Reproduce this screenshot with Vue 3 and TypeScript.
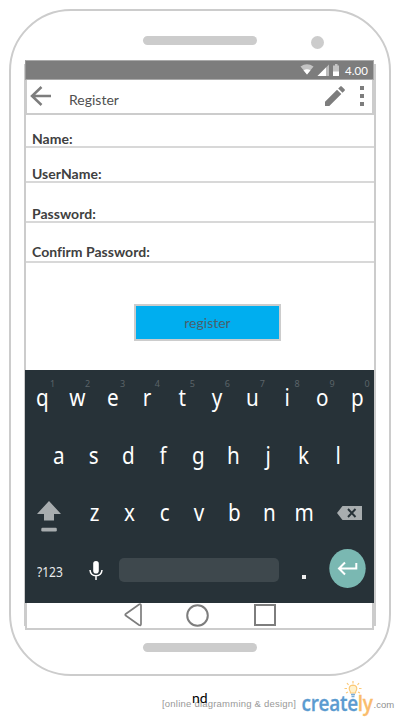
<script setup lang="ts">
interface Key { label: string; hint?: string }

const topRow: Key[] = [...'qwertyuiop'].map((label, i) => ({ label, hint: String((i + 1) % 10) }))
const homeRow: Key[] = [...'asdfghjkl'].map((label) => ({ label }))
const bottomRow: Key[] = [...'zxcvbnm'].map((label) => ({ label }))

const fields = [
  { label: 'Name:', kind: 'name' },
  { label: 'UserName:', kind: 'user' },
  { label: 'Password:', kind: 'pass' },
  { label: 'Confirm Password:', kind: 'confirm' },
]
</script>

<template>
  <div class="page">
    <div class="phone">
      <header class="phone-top">
        <span class="speaker"></span>
        <span class="camera"></span>
      </header>

      <main class="screen">
        <div class="status">
          <svg class="status-icons" width="42" height="14" viewBox="0 0 42 14">
            <path d="M.5 3.5Q7-1 13.500 3.500L7 11.500Z" fill="#c4c4c4" />
            <path d="M3.500 7.200Q7 5.200 10.500 7.200L7 11.500Z" fill="#fff" />
            <path d="M17.500 13L29 1.500V13Z" fill="#bdbdbd" />
            <path d="M17.500 13L26 4.500V13Z" fill="#fff" />
            <path d="M33 2.500H35V1H37.500V2.500H39V9H33Z" fill="#c4c4c4" />
            <path d="M33 8.500H39V13H33Z" fill="#fff" />
          </svg>
          <span class="clock">4.00</span>
        </div>

        <div class="appbar">
          <svg class="back" width="22" height="22" viewBox="0 0 22 22">
            <path d="M11.500 2L2 11L11.500 20M2 11H21" fill="none" stroke="#7d7d7d" stroke-width="2.500" />
          </svg>
          <h1 class="title">Register</h1>
          <svg class="pencil" width="22" height="22" viewBox="0 0 22 22">
            <path d="M1 21V16.700L13 4.700L17.300 9L5.300 21ZM14.200 3.500L16.300 1.400Q17 .7 17.700 1.400L20.600 4.300Q21.300 5 20.600 5.700L18.500 7.800Z" fill="#7d7d7d" />
          </svg>
          <span class="more"><i></i><i></i><i></i></span>
        </div>

        <form class="form" @submit.prevent>
          <div v-for="f in fields" :key="f.kind" class="field" :class="f.kind">
            <label><span>{{ f.label }}</span></label>
          </div>
          <button class="submit" type="submit">register</button>
        </form>

        <section class="keyboard">
          <div class="row top">
            <span v-for="k in topRow" :key="k.label" class="key">
              <b>{{ k.label }}</b><sup>{{ k.hint }}</sup>
            </span>
          </div>
          <div class="row home">
            <span v-for="k in homeRow" :key="k.label" class="key"><b>{{ k.label }}</b></span>
          </div>
          <div class="row bottom">
            <svg class="shift" width="24" height="32" viewBox="0 0 24 32">
              <path d="M12 0L24 13H17V19.500H7V13H0Z" fill="#a8adaf" />
              <rect x="4.300" y="26.800" width="15.500" height="3.600" rx="1.200" fill="#a8adaf" />
            </svg>
            <span v-for="k in bottomRow" :key="k.label" class="key"><b>{{ k.label }}</b></span>
            <svg class="delete" width="25" height="14" viewBox="0 0 25 14">
              <path d="M0 7L5.500 0H25V14H5.500Z" fill="#a8adaf" />
              <path d="M11 3L18.500 11M18.500 3L11 11" stroke="#273238" stroke-width="1.900" />
            </svg>
          </div>
          <div class="row action">
            <span class="symbols"><span>?123</span></span>
            <svg class="mic" width="14" height="20" viewBox="0 0 14 20">
              <rect x="4.200" y="0" width="5.600" height="12.500" rx="2.800" fill="#fff" />
              <path d="M1 9Q1.500 14.700 7 14.700T13 9M7 14.500V19" fill="none" stroke="#fff" stroke-width="1.500" />
            </svg>
            <span class="space"></span>
            <span class="dot"></span>
            <svg class="enter" width="37" height="39" viewBox="0 0 37 39">
              <ellipse cx="18.500" cy="19.500" rx="18.200" ry="19.500" fill="#7ab8b2" />
              <path d="M16 13.500L10 19.500L16 25.500M10 19.500H27.300V14" fill="none" stroke="#fff" stroke-width="2" />
            </svg>
          </div>
        </section>

        <nav class="nav">
          <svg width="18" height="24" viewBox="0 0 18 24">
            <path d="M2 10.700L15 1.500Q17 .5 17 2.500V21Q17 23 15 22L2 12.800Q.5 11.750 2 10.700Z" fill="none" stroke="#7d7d7d" stroke-width="1.700" />
          </svg>
          <svg width="23" height="23" viewBox="0 0 23 23">
            <circle cx="11.500" cy="11.500" r="10.300" fill="none" stroke="#7d7d7d" stroke-width="2" />
          </svg>
          <span class="square"></span>
        </nav>
      </main>

      <span class="speaker low"></span>
    </div>

    <footer class="footer">
      <span class="tagline">[online diagramming &amp; design]</span>
      <span class="brand"><span class="word"><span class="blue">create</span><span class="orange">ly</span></span>
        <svg class="bulb" width="18" height="17" viewBox="0 0 18 17">
          <path d="M6.500 12Q6.500 10.500 5.500 9Q4.200 4.500 9 4.200Q13.800 4.500 12.500 9Q11.500 10.500 11.500 12Z" fill="#fff2cd" stroke="#fbc978" stroke-width="1.200" />
          <path d="M7 13.500H11M7.500 15.500H10.500" stroke="#7badd6" stroke-width="1.400" />
          <path d="M9 0V2.500M3 2L4.500 4M15 2L13.500 4M.5 7.500H3M17.500 7.500H15M2 12L4 11M16 12L14 11" stroke="#fbc978" stroke-width="1.200" />
        </svg>
      </span>
      <span class="tld">.com</span>
      <span class="note">nd</span>
    </footer>
  </div>
</template>

<style>
body { background: #fff; }
</style>

<style scoped>
* { box-sizing: border-box; }
.page { width: 400px; height: 719px; padding: 9px 9px 0; overflow: hidden; background: #fff; font-family: Lato, "Liberation Sans", sans-serif; }
.phone { width: 382px; height: 667px; border: 2px solid #ccc; border-radius: 62px; padding: 25px 13px 0; display: flex; flex-direction: column; }
.phone-top { height: 24px; flex: none; display: flex; align-items: flex-start; padding-left: 118.500px; }
.speaker { width: 114.500px; height: 9px; border-radius: 5px; background: #ccc; flex: none; }
.speaker.low { margin: 13px 0 0 118.500px; }
.camera { width: 13.400px; height: 13.400px; border-radius: 50%; background: #ccc; margin-left: 54px; }
.screen { position: relative; width: 352px; height: 570px; flex: none; padding: 0 2px 0 1px; display: flex; flex-direction: column; }
.screen::before { content: ""; position: absolute; left: 0; right: 0; top: 4px; height: 562px; border: solid #ccc; border-width: 0 2px; }
.screen > * { position: relative; }
.status { height: 20px; flex: none; background: #7d7d7d; border: 1px solid #aaa; border-left-color: #999; display: flex; align-items: center; justify-content: flex-end; padding-right: 4px; }
.status-icons { margin: 0 3px 0 0; }
.clock { width: 24px; color: #fff; font-size: 11.500px; line-height: 18px; padding-top: 1px; letter-spacing: .1px; white-space: nowrap; }
.appbar { height: 35px; flex: none; border: solid #ccc; border-width: 0 2px 2px; display: flex; align-items: flex-start; padding: 5px 0 0 2.500px; background: #fff; }
.title { margin: 5px 0 0 17.500px; font-size: 14px; line-height: 20px; font-weight: 400; color: #505050; flex: 1; }
.pencil { margin-right: 14px; }
.more { width: 4px; margin: 1px 8px 0 0; display: grid; gap: 4px; }
.more i { width: 4px; height: 4px; background: #7d7d7d; }
.form { height: 255px; flex: none; display: flex; flex-direction: column; padding-left: 1px; }
.field { border-bottom: 2px solid #d8d8d8; flex: none; display: flex; align-items: flex-end; padding-left: 6px; }
.field label { font-size: 14px; line-height: 14px; font-weight: 700; color: #404040; white-space: nowrap; letter-spacing: .02px; }
.name { height: 33px; }
.user { height: 35px; }
.pass { height: 40px; }
.confirm { height: 40px; padding-bottom: 2px; }
.submit { width: 147px; height: 37px; margin: 41px 0 0 108px; flex: none; border: 2px solid #ccc; background: #00aeef; color: #48616d; font: 400 14px/20px Lato, sans-serif; padding: 0; }
.keyboard { height: 233px; flex: none; background: #273238; display: flex; flex-direction: column; }
.row { display: flex; height: 57.500px; flex: none; }
.key { position: relative; width: 34.950px; flex: none; display: flex; justify-content: center; }
.key b { font: 400 24px/54px "Noto Sans", sans-serif; color: #fff; transform: scaleX(.86); }
.key sup { position: absolute; top: 8px; left: 25px; font: 9px/11px "Noto Sans", sans-serif; color: #5b6468; }
.home { padding-left: 16px; }
.bottom { align-items: flex-start; padding-left: 12px; }
.shift { margin: 16px 16px 0 0; }
.delete { margin: 21px 0 0 15.500px; }
.action { height: 60px; align-items: flex-start; }
.symbols { width: 39px; height: 59px; padding-left: 12px; font: 14px/57px "Noto Sans", sans-serif; color: #e8eaeb; white-space: nowrap; }
.symbols span { display: inline-block; transform: scaleX(.86); transform-origin: left; }
.mic { margin: 18px 0 0 24.500px; }
.space { width: 160px; height: 24px; border-radius: 5px; background: #3e484d; margin: 15px 0 0 16.500px; }
.dot { width: 4px; height: 4px; background: #eee; margin: 32px 0 0 23px; }
.enter { margin: 6.500px 0 0 22.700px; }
.nav { height: 27px; flex: none; border: solid #ccc; border-width: 0 2px 2px; background: #fff; display: flex; align-items: flex-start; padding: 0 0 0 96.500px; }
.nav svg:nth-child(2) { margin-left: 44.500px; margin-top: .5px; }
.square { width: 22px; height: 22px; border: 2px solid #7d7d7d; margin: 1px 0 0 45px; }
.footer { position: relative; height: 43px; display: flex; padding-left: 153px; white-space: nowrap; }
.tagline { width: 139.500px; font: 9.500px/14px "Liberation Sans", sans-serif; letter-spacing: .22px; color: #999; margin-top: 21px; }
.brand { position: relative; width: 72px; margin-top: 13px; }
.word { display: inline-block; font: 600 22px/26px "Open Sans", sans-serif; letter-spacing: -.3px; transform: translateX(-.5px) scaleX(.86); transform-origin: left; -webkit-text-stroke: .3px currentColor; }
.brand { margin-left: 0; padding-left: 0; }
.blue { color: #5b9bd0; }
.orange { color: #fabc6c; }
.bulb { position: absolute; left: 42px; top: -8px; }
.tld { font: 9.500px/14px "Liberation Sans", sans-serif; color: #909090; margin-top: 22px; }
.tagline + .brand { margin-left: 0; }
.note { position: absolute; left: 183px; top: 13px; font-size: 14px; line-height: 18px; color: #000; }
.tagline { flex: none; }
.brand { flex: none; }
</style>
